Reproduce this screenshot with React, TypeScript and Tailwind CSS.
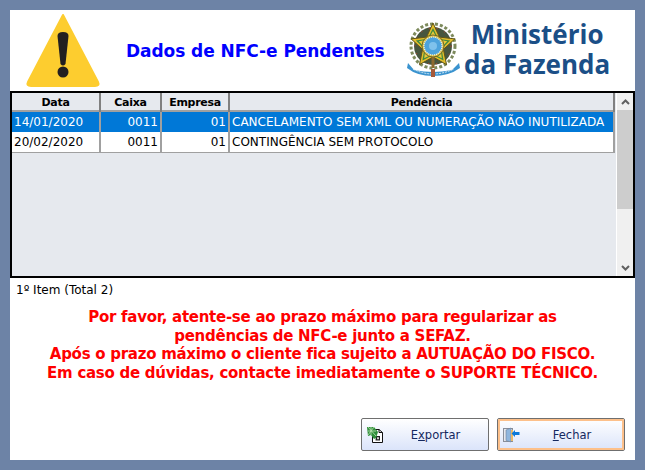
import React from "react";

const font = { fontFamily: '"DejaVu Sans", sans-serif' };

function Warning() {
  return (
    <svg width="76" height="76" viewBox="0 0 76 76" className="shrink-0">
      <path d="M38 3 L73 70 Q75 74 70 74 L6 74 Q1 74 3 70 Z" fill="#fdcd2f" stroke="#fdcd2f" strokeWidth="2" strokeLinejoin="round" />
      <path d="M32.5 24 Q32.5 20 38 20 Q43.5 20 43.5 24 L40.5 52 Q38 55 35.5 52 Z" fill="#231f20" />
      <circle cx="38" cy="60" r="5.5" fill="#231f20" />
    </svg>
  );
}

function star(cx: number, cy: number, R: number, r: number) {
  return Array.from({ length: 5 }, (_, i) => {
    const a = (-90 + i * 72) * (Math.PI / 180);
    const b = (-90 + i * 72 + 36) * (Math.PI / 180);
    return `${cx + R * Math.cos(a)},${cy + R * Math.sin(a)} ${cx + r * Math.cos(b)},${cy + r * Math.sin(b)}`;
  }).join(" ");
}

function Arms() {
  return (
    <svg width="54" height="56" viewBox="0 0 54 56" className="shrink-0">
      <circle cx="26" cy="24" r="19" fill="#47563f" />
      <circle cx="26" cy="24" r="22" fill="none" stroke="#7d8a5c" strokeWidth="3" strokeDasharray="3 2" />
      <circle cx="26" cy="24" r="18" fill="none" stroke="#c83a2a" strokeWidth="1" strokeDasharray="1 7" />
      <polygon points={star(26, 24, 23, 11)} fill="#e3bd2c" stroke="#5e5418" strokeWidth="1" />
      <polygon points={star(26, 24, 18, 9)} fill="#3f8a3f" />
      <polygon points={star(26, 24, 15, 8)} fill="#e9c838" />
      <circle cx="26" cy="24" r="11" fill="#d9c04a" stroke="#5d5320" strokeWidth=".8" />
      <circle cx="26" cy="24" r="9" fill="#4da3dd" stroke="#eef6fb" strokeWidth="1.2" strokeDasharray="1 1" />
      <circle cx="26" cy="24" r="4" fill="#7fc2ec" />
      <rect x="24.5" y="35" width="3" height="11" fill="#8d6a2e" />
      <path d="M1 41 L7 48 Q17 50 26 50 Q35 50 45 48 L52 41 L53 46 Q42 54 26 54 Q10 54 0 46 Z" fill="#3a93cf" />
      <path d="M6 47 Q16 52 26 52 Q36 52 47 47" fill="none" stroke="#d7ecf7" strokeWidth="1" strokeDasharray="2 1" />
      <rect x="24" y="47" width="4" height="8" fill="#a5593a" />
    </svg>
  );
}

function Excel() {
  return (
    <svg width="16" height="16" viewBox="0 0 16 16" className="shrink-0">
      <path d="M5.5 2.5 H12 L15.5 5.5 V15.5 H5.5 Z" fill="#fff" stroke="#111" />
      <path d="M12 2.5 V5.5 H15.5" fill="none" stroke="#111" />
      <path d="M9 9 H13 V13.5 H8.5 Z M10.2 10.2 V12.3 H11.8 V10.2 Z" fill="#222" />
      <path d="M0 0 H7 L11 5 L9 11 L7 12 L4 8 L1 9 Z" fill="#2f8f3a" />
      <path d="M1 0 L9 9 M7 0 L1 8 M1 4 H9 M4 0 V8" stroke="#bfe3b8" strokeWidth=".8" />
    </svg>
  );
}

function Door() {
  return (
    <svg width="17" height="16" viewBox="0 0 17 16" className="shrink-0">
      <rect x="0.5" y="1.5" width="9" height="13" fill="#e4e7ee" stroke="#8a8f9a" />
      <path d="M3 3 L8 1 V15 L3 13.5 Z" fill="#8fb6de" stroke="#6f8298" strokeWidth=".6" />
      <rect x="8" y="3" width="2" height="11" fill="#e9b968" />
      <path d="M8.5 6.5 L12 3 V5 H16.5 V8 H12 V10 Z" fill="#0a78d8" />
    </svg>
  );
}

const cols = "grid grid-cols-[89px_61px_68px_1fr]";

function Row({ data, selected, last }: { data: string[]; selected?: boolean; last?: boolean }) {
  return (
    <div className={`${cols} h-[20px] text-[12px] leading-[20px] ${selected ? "bg-[#0078d7] text-white" : "bg-white text-black"} ${last ? "h-[21px] border-b border-[#a0a0a0]" : ""}`}>
      <div className="border-r-2 border-[#a0a0a0] pl-[2px]">{data[0]}</div>
      <div className="border-r-2 border-[#a0a0a0] pr-[2px] text-right">{data[1]}</div>
      <div className="border-r-2 border-[#a0a0a0] pr-[2px] text-right">{data[2]}</div>
      <div className="border-r-2 border-[#a0a0a0] pl-[2px] whitespace-nowrap overflow-hidden">{data[3]}</div>
    </div>
  );
}

function Btn({ icon, focus, children }: { icon: React.ReactNode; focus?: boolean; children: React.ReactNode }) {
  return (
    <button className={`w-[128px] h-[33px] flex items-center rounded-[2px] border border-[#6f6f6f] bg-gradient-to-b from-white to-[#dbe4fa] pl-[5px] text-[11.5px] text-[#14285f] ${focus ? "outline-2 -outline-offset-[3px] outline-[#fdc08a]" : ""}`}>
      {icon}
      <span className="flex-1 text-center pt-[2px]">{children}</span>
    </button>
  );
}

export default function App() {
  return (
    <div className="w-[645px] h-[470px] bg-[#6d83a6] p-[10px] overflow-hidden" style={font}>
      <div className="h-[450px] bg-white flex flex-col">
        <div className="h-[81px] flex items-start">
          <div className="ml-[15px] mt-[2px] w-[76px]"><Warning /></div>
          <div className="ml-[25px] mt-[30px] w-[257px] text-[17px] tracking-[-0.06px] leading-[22px] font-bold text-[#0000ff] whitespace-nowrap">Dados de NFC-e Pendentes</div>
          <div className="ml-[24px] mt-[12px]"><Arms /></div>
          <div className="ml-[3px] mt-[9px] text-[#1b4f87] font-bold text-[26px] leading-[30px] text-center whitespace-nowrap" style={{ fontFamily: '"Open Sans", sans-serif' }}>
            <div>Ministério</div>
            <div>da Fazenda</div>
          </div>
        </div>
        <div className="h-[187px] border-2 border-black flex bg-[#e6e9ee]">
          <div className="flex-1 min-w-0 flex flex-col">
            <div className={`${cols} h-[19px] text-[11px] tracking-[-0.3px] font-bold leading-[19px] text-center text-black bg-[#e6e9ee] border-b-2 border-[#a0a0a0]`}>
              <div className="border-r-2 border-[#808080]">Data</div>
              <div className="border-r-2 border-[#808080]">Caixa</div>
              <div className="border-r-2 border-[#808080]">Empresa</div>
              <div className="border-r-2 border-[#808080]">Pendência</div>
            </div>
            <Row selected data={["14/01/2020", "0011", "01", "CANCELAMENTO SEM XML OU NUMERAÇÃO NÃO INUTILIZADA"]} />
            <Row last data={["20/02/2020", "0011", "01", "CONTINGÊNCIA SEM PROTOCOLO"]} />
          </div>
          <div className="w-[17px] ml-[1px] bg-[#f0f0f0] flex flex-col border-l border-white">
            <div className="h-[17px] flex items-center justify-center">
              <svg width="9" height="6" viewBox="0 0 9 6"><path d="M1 5 L4.5 1.5 L8 5" fill="none" stroke="#606060" strokeWidth="2" /></svg>
            </div>
            <div className="h-[99px] bg-[#cdcdcd]" />
            <div className="flex-1 flex items-end justify-center pb-[5px]">
              <svg width="9" height="6" viewBox="0 0 9 6"><path d="M1 1 L4.5 4.5 L8 1" fill="none" stroke="#606060" strokeWidth="2" /></svg>
            </div>
          </div>
        </div>
        <div className="h-[24px] pl-[6px] text-[12px] leading-[24px] text-black">1º Item (Total 2)</div>
        <div className="mt-[6px] text-center text-[15px] tracking-[-0.27px] font-bold text-[#ff0000] leading-[18.7px]">
          <div>Por favor, atente-se ao prazo máximo para regularizar as</div>
          <div>pendências de NFC-e junto a SEFAZ.</div>
          <div>Após o prazo máximo o cliente fica sujeito a AUTUAÇÃO DO FISCO.</div>
          <div>Em caso de dúvidas, contacte imediatamente o SUPORTE TÉCNICO.</div>
        </div>
        <div className="mt-auto mb-[9px] flex justify-end gap-[8px] pr-[10px]">
          <Btn icon={<Excel />}>E<u>x</u>portar</Btn>
          <Btn icon={<Door />} focus><u>F</u>echar</Btn>
        </div>
      </div>
    </div>
  );
}
